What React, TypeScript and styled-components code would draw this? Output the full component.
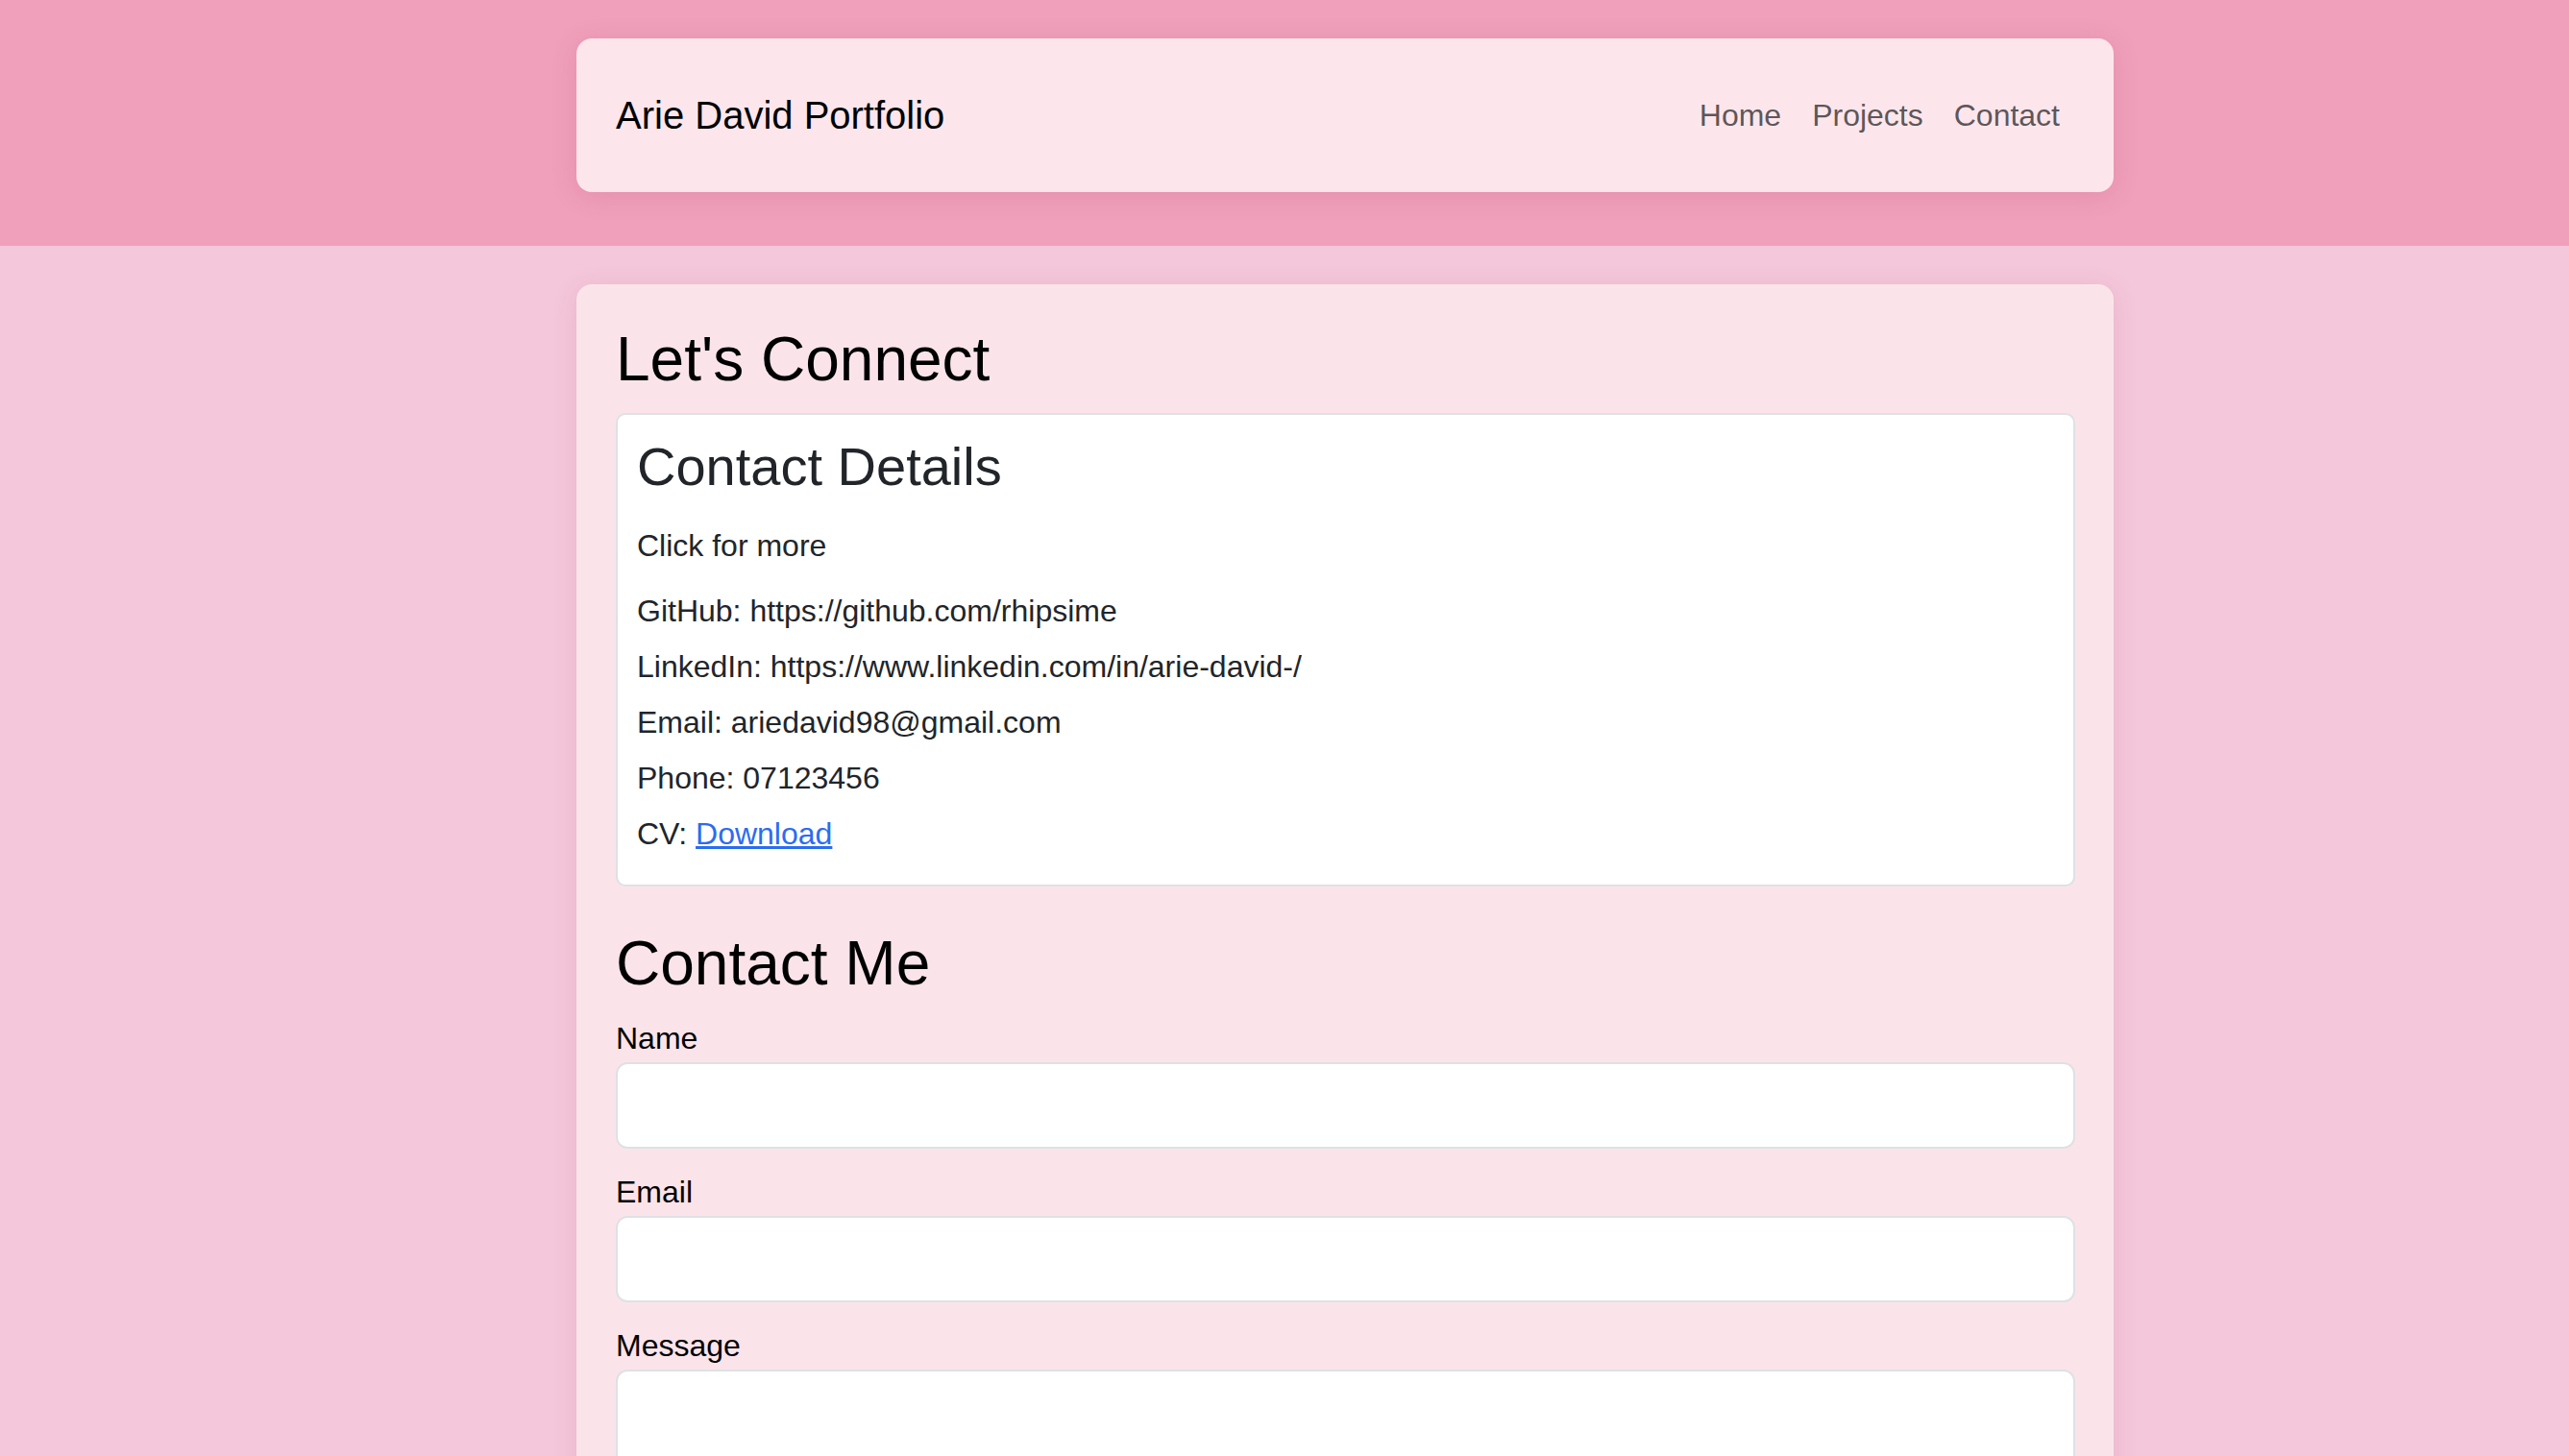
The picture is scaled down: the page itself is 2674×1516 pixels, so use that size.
import React from "react";
import styled, { createGlobalStyle } from "styled-components";

const GlobalStyle = createGlobalStyle`
  html, body {
    margin: 0;
    padding: 0;
  }
  body {
    background: #f4c7da;
    font-family: "Liberation Sans", Arial, sans-serif;
    color: #212529;
  }
  * { box-sizing: border-box; }
`;

const HeaderBand = styled.header`
  background: #f0a0bb;
  padding: 40px 0 56px;
`;

const NavCard = styled.nav`
  margin-left: 600px;
  width: 1600px;
  height: 160px;
  padding: 0 40px 0 41px;
  background: #fce6ec;
  border-radius: 16px;
  box-shadow: 0 4px 26px rgba(170, 60, 100, 0.18);
  display: flex;
  align-items: center;
  justify-content: space-between;
`;

const Brand = styled.a`
  font-size: 40px;
  line-height: 60px;
  color: #000;
  text-decoration: none;
`;

const NavList = styled.div`
  display: flex;
  align-items: center;
`;

const NavLink = styled.a`
  font-size: 32px;
  line-height: 48px;
  padding: 0 16px;
  color: rgba(0, 0, 0, 0.65);
  text-decoration: none;
`;

const Main = styled.main`
  padding-top: 40px;
`;

const Card = styled.section`
  margin-left: 600px;
  width: 1600px;
  padding: 40px 40px 40px 41px;
  background: #fae4ea;
  border-radius: 16px;
  box-shadow: 0 4px 26px rgba(170, 60, 100, 0.14);
`;

const Title = styled.h1<{ $top?: number; $bottom: number }>`
  font-size: 64px;
  line-height: 76.8px;
  font-weight: 400;
  color: #000;
  margin: ${(p) => p.$top ?? 0}px 0 ${(p) => p.$bottom}px;
`;

const DetailsCard = styled.div`
  background: #fff;
  border: 2px solid #dfe1e4;
  border-radius: 10px;
  padding: 20px 20px 19px;
`;

const DetailsTitle = styled.h3`
  font-size: 56px;
  line-height: 67.2px;
  font-weight: 400;
  color: #212529;
  margin: 0 0 25px;
`;

const Line = styled.p<{ $gap?: number }>`
  font-size: 32px;
  line-height: 48px;
  margin: 0 0 ${(p) => p.$gap ?? 10}px;
  color: #212529;
`;

const Link = styled.a`
  color: #2b6cf2;
  text-decoration: underline;
`;

const Form = styled.form`
  display: flex;
  flex-direction: column;
`;

const Field = styled.div`
  display: flex;
  flex-direction: column;
  margin-bottom: 21px;
`;

const Label = styled.label`
  font-size: 32px;
  line-height: 48px;
  color: #000;
  margin-bottom: 1px;
`;

const Input = styled.input`
  height: 90px;
  width: 100%;
  border: 2px solid #dfe1e4;
  border-radius: 12px;
  background: #fff;
  padding: 12px 24px;
  font-size: 32px;
  font-family: inherit;
  outline: none;
`;

const TextArea = styled.textarea`
  height: 260px;
  width: 100%;
  border: 2px solid #dfe1e4;
  border-radius: 12px;
  background: #fff;
  padding: 12px 24px;
  font-size: 32px;
  font-family: inherit;
  resize: vertical;
  outline: none;
`;

const details = [
  "GitHub: https://github.com/rhipsime",
  "LinkedIn: https://www.linkedin.com/in/arie-david-/",
  "Email: ariedavid98@gmail.com",
  "Phone: 07123456",
];

export default function App() {
  return (
    <>
      <GlobalStyle />
      <HeaderBand>
        <NavCard>
          <Brand href="#">Arie David Portfolio</Brand>
          <NavList>
            <NavLink href="#">Home</NavLink>
            <NavLink href="#">Projects</NavLink>
            <NavLink href="#">Contact</NavLink>
          </NavList>
        </NavCard>
      </HeaderBand>
      <Main>
        <Card>
          <Title $bottom={17}>Let's Connect</Title>
          <DetailsCard>
            <DetailsTitle>Contact Details</DetailsTitle>
            <Line $gap={20}>Click for more</Line>
            {details.map((d) => (
              <Line key={d}>{d}</Line>
            ))}
            <Line>
              CV: <Link href="#">Download</Link>
            </Line>
          </DetailsCard>
          <Title as="h2" $top={42} $bottom={15}>
            Contact Me
          </Title>
          <Form onSubmit={(e) => e.preventDefault()}>
            <Field>
              <Label htmlFor="name">Name</Label>
              <Input id="name" type="text" />
            </Field>
            <Field>
              <Label htmlFor="email">Email</Label>
              <Input id="email" type="email" />
            </Field>
            <Field>
              <Label htmlFor="message">Message</Label>
              <TextArea id="message" />
            </Field>
          </Form>
        </Card>
      </Main>
    </>
  );
}
